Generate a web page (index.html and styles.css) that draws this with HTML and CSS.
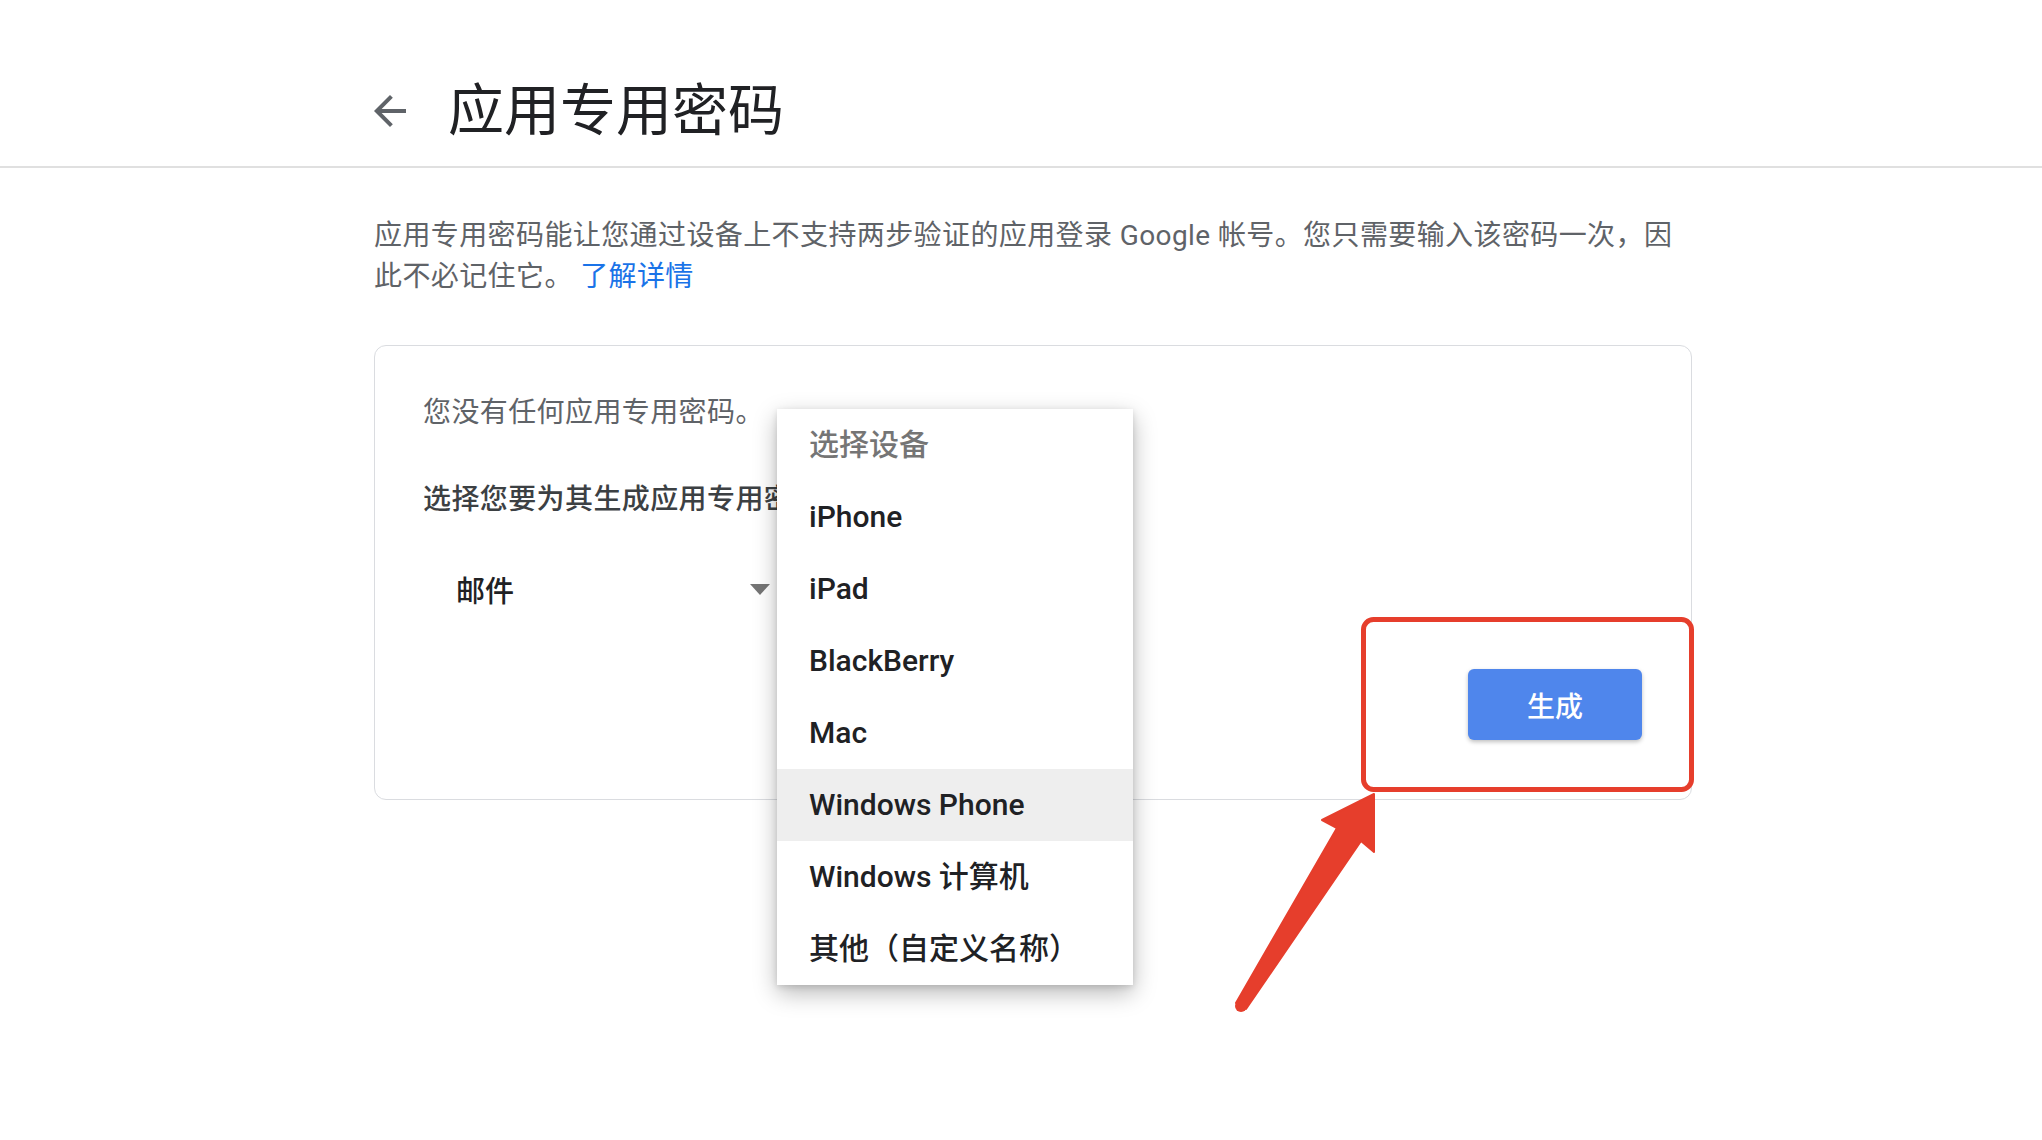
FILE: index.html
```html
<!DOCTYPE html>
<html>
<head>
<meta name="viewport" content="width=device-width, initial-scale=1">
<title>应用专用密码</title>
<link rel="stylesheet" href="styles.css">
</head>
<body>

<div class="header">
  <div class="wrap head-row">
    <svg class="back" viewBox="0 0 24 24"><path d="M20 11H7.83l5.59-5.59L12 4l-8 8 8 8 1.41-1.41L7.83 13H20v-2z"/></svg>
    <h1>应用专用密码</h1>
  </div>
</div>

<div class="wrap">
  <p class="desc">应用专用密码能让您通过设备上不支持两步验证的应用登录 Google 帐号。您只需要输入该密码一次，因此不必记住它。 <a href="#">了解详情</a></p>

  <div class="card">
    <p class="none">您没有任何应用专用密码。</p>
    <p class="prompt">选择您要为其生成应用专用密码的应用和设备。</p>

    <div class="select">
      <span>邮件</span>
      <span class="caret"></span>
    </div>

    <div class="actions">
      <button class="gen">生成</button>
    </div>

    <!-- open device dropdown -->
    <ul class="menu">
      <li class="placeholder">选择设备</li>
      <li>iPhone</li>
      <li>iPad</li>
      <li>BlackBerry</li>
      <li>Mac</li>
      <li class="active">Windows Phone</li>
      <li>Windows 计算机</li>
      <li>其他（自定义名称）</li>
    </ul>
  </div>
</div>

<!-- annotation: red box + arrow -->
<svg class="annot" width="2042" height="1140" viewBox="0 0 2042 1140">
  <rect x="1363.5" y="619.5" width="328" height="170" rx="10" ry="10" fill="none" stroke="#e63e2c" stroke-width="5"/>
  <polygon points="1374,794 1374,852 1361,841 1246,1009 1236,1003 1337,828 1322,820" fill="#e63e2c" stroke="#e63e2c" stroke-width="2" stroke-linejoin="round"/>
  <circle cx="1241" cy="1006" r="6" fill="#e63e2c"/>
</svg>

</body>
</html>
```

FILE: styles.css
```css
html, body {
    min-height: 1140px;
}

body {
    margin: 0;
    position: relative;
    background: #fff;
    font-family: Roboto, "Noto Sans CJK SC", sans-serif;
    color: #202124;
}

.wrap {
    width: 1318px;
    margin-left: 374px;
}

/* Header */
.header {
    border-bottom: 2px solid #e0e0e0;
    padding: 79px 0 23px;
}

.head-row {
    display: flex;
    align-items: center;
}

.back {
    width: 48px;
    height: 48px;
    margin-left: -8px;
    margin-right: 34px;
    fill: #5f6368;
}

.header h1 {
    margin: 0;
    font-size: 56px;
    line-height: 64px;
    font-weight: 400;
    color: #202124;
}

/* Description */
.desc {
    margin: 47px 0 0;
    width: 1310px;
    font-size: 28px;
    line-height: 41px;
    letter-spacing: 0.4px;
    color: #5f6368;
}

.desc a {
    color: #1a73e8;
    text-decoration: none;
}

/* Card */
.card {
    position: relative;
    margin-top: 48px;
    border: 1px solid #dadce0;
    border-radius: 12px;
    padding: 47px 49px 59px 48px;
}

.card p {
    margin: 0;
    font-size: 28px;
    line-height: 40px;
    letter-spacing: 0.4px;
}

.none {
    color: #5f6368;
}

/* the open menu covers the end of this line */
.card .prompt {
    margin-top: 47px;
    width: 354px;
    white-space: nowrap;
    overflow: hidden;
    color: #3c4043;
    font-weight: 500;
}

.select {
    margin-top: 41px;
    width: 314px;
    height: 56px;
    padding: 0 10px 0 33px;
    display: flex;
    align-items: center;
    justify-content: space-between;
    font-size: 29px;
    font-weight: 500;
    color: #202124;
}

.caret {
    width: 0;
    height: 0;
    border-left: 10px solid transparent;
    border-right: 10px solid transparent;
    border-top: 11px solid #757575;
}

.actions {
    margin-top: 52px;
    display: flex;
    justify-content: flex-end;
}

.gen {
    width: 174px;
    height: 71px;
    border: none;
    border-radius: 6px;
    background-color: #4f86ec;
    color: white;
    font-family: Roboto, "Noto Sans CJK SC", sans-serif;
    font-size: 28px;
    font-weight: 500;
    box-shadow: 0 2px 4px rgba(0,0,0,0.25);
    cursor: pointer;
}

/* Dropdown menu */
.menu {
    position: absolute;
    left: 402px;
    top: 63px;
    width: 356px;
    margin: 0;
    padding: 0;
    list-style: none;
    background: #fff;
    box-shadow: 0 8px 22px rgba(0,0,0,0.28), 0 2px 6px rgba(0,0,0,0.12);
    z-index: 2;
}

.menu li {
    height: 72px;
    line-height: 72px;
    padding-left: 32px;
    font-size: 30px;
    font-weight: 500;
    color: #202124;
}

.menu .placeholder {
    color: #757575;
}

.menu .active {
    background-color: #eeeeee;
}

/* Annotation overlay */
.annot {
    position: absolute;
    left: 0;
    top: 0;
    pointer-events: none;
    z-index: 5;
}
```
